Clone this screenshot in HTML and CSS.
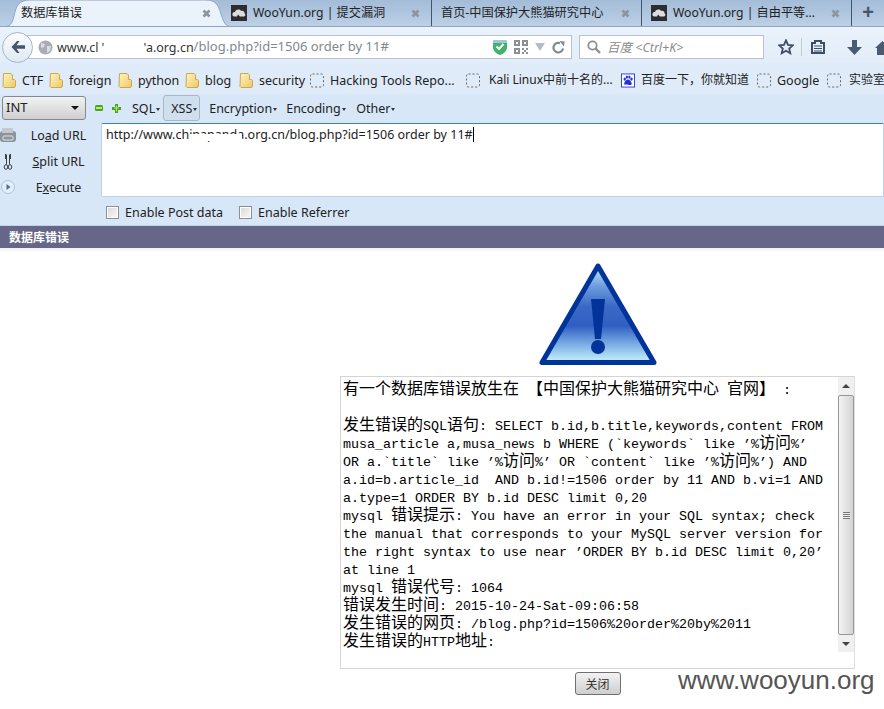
FILE: index.html
```html
<!DOCTYPE html>
<html lang="zh">
<head>
<meta charset="utf-8">
<title>数据库错误</title>
<link rel="stylesheet" href="styles.css">
</head>
<body>
<svg class="defs" width="0" height="0">
  <defs>
    <linearGradient id="fold" x1="0" y1="0" x2="1" y2="1"><stop offset="0" stop-color="#fdf3c0"/><stop offset="1" stop-color="#eec964"/></linearGradient>
    <linearGradient id="tri" x1="0" y1="0" x2="0" y2="1">
      <stop offset="0" stop-color="#c4ecfa"/><stop offset=".2" stop-color="#6f9fe0"/><stop offset=".42" stop-color="#3a68c6"/><stop offset=".62" stop-color="#2f5fc2"/><stop offset=".82" stop-color="#7fb0e6"/><stop offset="1" stop-color="#c8f4fd"/>
    </linearGradient>
    <symbol id="folder" viewBox="0 0 14 15"><path d="M1.500 .5h7.500l1.500 1.500v4.500h2l1 1v5.500l-1 1.500h-10.500l-1-1z" fill="url(#fold)" stroke="#c9a94f"/></symbol>
    <symbol id="blank" viewBox="0 0 14 14"><rect x=".5" y=".5" width="13" height="13" rx="2" fill="none" stroke="#666" stroke-dasharray="2 2"/></symbol>
    <symbol id="cloud" viewBox="0 0 16 16"><rect width="16" height="16" fill="#2d2d2f"/><path d="M2 11c-1.500-2 0-4 2-4 1-3 5-3 6-1 2-1 4 1 3.500 2.500 1.500 .5 1 3-1 3H9L7 9.500 6 11.500H3z" fill="#ddd"/></symbol>
    <symbol id="close" viewBox="0 0 9 9"><path d="M1.500 1.500l6 6M7.500 1.500l-6 6" stroke="#8c949e" stroke-width="2.600" fill="none"/></symbol>
  </defs>
</svg>

<header class="tabs">
  <div class="tab tab-active">
    <svg class="tab-shape" viewBox="0 0 230 27"><path d="M0 27c8 0 10-3 12-11C14 6 17 0 28 0h176c10 0 12 5 15 14 3 9 5 13 11 13z" fill="#eaf2fb" stroke="#8fa6bf"/></svg>
    <span class="tab-label">数据库错误</span>
    <svg class="tab-close"><use href="#close"/></svg>
  </div>
  <div class="tab">
    <svg class="favicon"><use href="#cloud"/></svg>
    <span class="tab-label">WooYun.org | 提交漏洞</span>
    <svg class="tab-close"><use href="#close"/></svg>
  </div>
  <div class="tab">
    <span class="tab-label">首页-中国保护大熊猫研究中心</span>
    <svg class="tab-close"><use href="#close"/></svg>
  </div>
  <div class="tab">
    <svg class="favicon"><use href="#cloud"/></svg>
    <span class="tab-label">WooYun.org | 自由平等...</span>
    <svg class="tab-close"><use href="#close"/></svg>
  </div>
  <div class="tab-new">+</div>
</header>

<nav class="nav">
  <button class="back" aria-label="back">
    <svg width="16" height="14" viewBox="0 0 16 14"><path d="M7 1L1.500 7 7 13h2.500L6.500 8.800H15V5.200H6.500L9.500 1z" fill="#47566a"/></svg>
  </button>
  <div class="urlbar">
    <svg class="globe" width="15" height="15" viewBox="0 0 15 15"><circle cx="7.500" cy="7.500" r="7" fill="#a9adb3"/><path d="M3 3l4 1-1 3-3 1zM9 6l4 0-1 5-3 2z" fill="#d9dce0"/></svg>
    <span class="url-host">www.cl</span><span class="url-redact"><span class="url-host">'</span></span><span class="url-host">'a.org.cn</span><span class="url-path">/blog.php?id=1506 order by 11#</span>
    <span class="spacer"></span>
    <svg class="url-ic" width="14" height="16" viewBox="0 0 14 16"><path d="M0 1h14v8c0 3-4 6-7 7-3-1-7-4-7-7z" fill="#3fb46a"/><path d="M0 1h14v3H0z" fill="#9dc9d8"/><path d="M3.500 7.500l2.500 2.500 4.500-5" stroke="#fff" stroke-width="2" fill="none"/></svg>
    <svg class="url-ic" width="14" height="14" viewBox="0 0 14 14"><path d="M0 0h6v6H0zM8 0h6v6H8zM0 8h6v6H0zM8 8h2v2H8zM12 8h2v2h-2zM8 12h2v2H8zM12 12h2v2h-2zM10 10h2v2h-2z" fill="#8d9196"/><path d="M2 2h2v2H2zM10 2h2v2h-2zM2 10h2v2H2z" fill="#fff"/></svg>
    <svg class="url-ic" width="10" height="8" viewBox="0 0 10 8"><path d="M0 0h10L5 8z" fill="#b4bcc6"/></svg>
    <svg class="url-ic" width="13" height="13" viewBox="0 0 13 13"><path d="M11 7.500A4.800 4.800 0 1 1 8 2.200" stroke="#7d8a99" stroke-width="2.200" fill="none"/><path d="M7.500 0L12.500 .5 12 5.500z" fill="#7d8a99"/></svg>
  </div>
  <div class="searchbar">
    <svg width="14" height="14" viewBox="0 0 14 14"><circle cx="5.500" cy="5.500" r="4.200" fill="none" stroke="#8a8f96" stroke-width="1.800"/><path d="M8.500 8.500l4.500 4.500" stroke="#8a8f96" stroke-width="2.400"/></svg>
    <span class="search-text">百度 &lt;Ctrl+K&gt;</span>
  </div>
  <div class="tools">
    <svg width="16" height="16" viewBox="0 0 16 16"><path d="M8 1.300l2 4.500 4.900.5-3.700 3.200 1.100 4.800L8 11.800l-4.300 2.500 1.100-4.800L1.100 6.300 6 5.800z" fill="none" stroke="#3e4f63" stroke-width="1.800"/></svg>
    <span class="tool-sep"></span>
    <svg class="tool-clip" width="14" height="14" viewBox="0 0 14 14"><path d="M1 3h3V1h6v2h3v10H1z" fill="none" stroke="#3e4f63" stroke-width="2"/><path d="M3 6h8M3 8.500h8M3 11h8" stroke="#3e4f63"/></svg>
    <svg class="tool-down" width="15" height="15" viewBox="0 0 15 15"><path d="M5 0h5v7h5l-7.500 8L0 7h5z" fill="#4a5b70"/></svg>
    <svg class="tool-home" width="15" height="15" viewBox="0 0 15 15"><path d="M7.500 1L15 8h-2v7H2V8H0z" fill="#4a5b70"/></svg>
  </div>
</nav>

<div class="bookmarks">
  <div class="bm bm-ctf"><svg class="bm-ic"><use href="#folder"/></svg><span>CTF</span></div>
  <div class="bm bm-foreign"><svg class="bm-ic"><use href="#folder"/></svg><span>foreign</span></div>
  <div class="bm bm-python"><svg class="bm-ic"><use href="#folder"/></svg><span>python</span></div>
  <div class="bm bm-blog"><svg class="bm-ic"><use href="#folder"/></svg><span>blog</span></div>
  <div class="bm bm-security"><svg class="bm-ic"><use href="#folder"/></svg><span>security</span></div>
  <div class="bm bm-hack"><svg class="bm-ic"><use href="#blank"/></svg><span>Hacking Tools Repo...</span></div>
  <div class="bm bm-kali"><svg class="bm-ic"><use href="#blank"/></svg><span>Kali Linux中前十名的...</span></div>
  <div class="bm bm-baidu"><svg class="bm-ic" viewBox="0 0 15 15"><rect x=".5" y=".5" width="14" height="14" fill="#fff" stroke="#2a3be0"/><g fill="#2430d8"><ellipse cx="4" cy="6" rx="1.300" ry="1.700"/><ellipse cx="6.300" cy="3.800" rx="1.200" ry="1.700"/><ellipse cx="9" cy="3.800" rx="1.200" ry="1.700"/><ellipse cx="11.200" cy="6" rx="1.300" ry="1.700"/><path d="M7.500 6.500c2 0 4 3 4 4.500s-2 1.700-4 1-4 1-4-1 2-4.500 4-4.500z"/></g></svg><span>百度一下，你就知道</span></div>
  <div class="bm bm-google"><svg class="bm-ic"><use href="#blank"/></svg><span>Google</span></div>
  <div class="bm bm-lab"><svg class="bm-ic"><use href="#blank"/></svg><span>实验室</span></div>
</div>

<section class="hackbar">
  <div class="hb-menu">
    <div class="hb-select"><span>INT</span><i class="hb-select-arrow"></i></div>
    <svg class="hb-minus" width="8" height="6" viewBox="0 0 8 6"><rect width="8" height="6" y="0" rx="1.500" fill="#46a518"/><rect x="1" y="2" width="6" height="2" fill="#b6e77c"/></svg>
    <svg class="hb-plus" width="9" height="9" viewBox="0 0 9 9"><path d="M3 0h3v3h3v3H6v3H3V6H0V3h3z" fill="#46a518"/><path d="M4 1.500h1v2h2v1H5v3H4v-3H2v-1h2z" fill="#b6e77c"/></svg>
    <span class="hb-item hb-sql">SQL<i class="caret"></i></span>
    <span class="hb-item hb-xss">XSS<i class="caret"></i></span>
    <span class="hb-item hb-enc">Encryption<i class="caret"></i></span>
    <span class="hb-item hb-encd">Encoding<i class="caret"></i></span>
    <span class="hb-item hb-oth">Other<i class="caret"></i></span>
  </div>
  <div class="hb-main">
    <div class="hb-actions">
      <div class="hb-act">
        <svg width="16" height="15" viewBox="0 0 16 15"><rect y="3" width="16" height="11" rx="3" fill="#8b949c"/><rect x="2" y="0" width="11" height="5" fill="#c3c9cf"/><rect x="3" y="8" width="10" height="4" rx="1" fill="none" stroke="#e4e7ea"/></svg>
        <span class="act-text">Lo<u>a</u>d URL</span>
      </div>
      <div class="hb-act">
        <svg width="10" height="17" viewBox="0 0 10 17"><g fill="none" stroke="#3a4048"><ellipse cx="3" cy="14" rx="1.800" ry="2.300"/><ellipse cx="7" cy="14" rx="1.800" ry="2.300"/><path d="M3.500 11.500V1.500M6.500 11.500V1.500M2.500 6V1M7.500 6V1" /></g></svg>
        <span class="act-text"><u>S</u>plit URL</span>
      </div>
      <div class="hb-act">
        <svg width="14" height="14" viewBox="0 0 14 14"><circle cx="7" cy="7" r="6.500" fill="#e3eef9" stroke="#a9c3df"/><path d="M5.500 4l4 3-4 3z" fill="#3d6fa8"/></svg>
        <span class="act-text">E<u>x</u>ecute</span>
      </div>
    </div>
    <div class="hb-input">
      <span class="hb-url">http://www.chinapanda.org.cn/blog.php?id=1506 order by 11#</span><i class="hb-cursor"></i>
      <i class="hb-redact"></i>
    </div>
  </div>
  <div class="hb-checks">
    <label class="hb-check"><i class="cb"></i>Enable Post data</label>
    <label class="hb-check"><i class="cb"></i>Enable Referrer</label>
  </div>
</section>

<div class="titlebar">数据库错误</div>
<div class="fade"></div>

<main class="page">
  <div class="col">
    <svg class="warn" width="118" height="103" viewBox="0 0 118 103">
      <path d="M59 3L3 99.500h112z" fill="url(#tri)" stroke="#023399" stroke-width="5" stroke-linejoin="round"/>
      <path d="M52 36h14l-4 40h-6z" fill="#023399"/>
      <circle cx="59" cy="84" r="7" fill="#023399"/>
    </svg>
    <div class="box">
      <div class="box-text">
        <div class="ln"><b>有一个数据库错误放生在</b> <b>【中国保护大熊猫研究中心</b> <b>官网】</b> :</div>
        <div class="ln">&nbsp;</div>
        <div class="ln"><b>发生错误的</b>SQL<b>语句</b>: SELECT b.id,b.title,keywords,content FROM</div>
        <div class="ln">musa_article a,musa_news b WHERE (`keywords` like ’%<b>访问</b>%’</div>
        <div class="ln">OR a.`title` like ’%<b>访问</b>%’ OR `content` like ’%<b>访问</b>%’) AND</div>
        <div class="ln">a.id=b.article_id  AND b.id!=1506 order by 11 AND b.vi=1 AND</div>
        <div class="ln">a.type=1 ORDER BY b.id DESC limit 0,20</div>
        <div class="ln">mysql <b>错误提示</b>: You have an error in your SQL syntax; check</div>
        <div class="ln">the manual that corresponds to your MySQL server version for</div>
        <div class="ln">the right syntax to use near ’ORDER BY b.id DESC limit 0,20’</div>
        <div class="ln">at line 1</div>
        <div class="ln">mysql <b>错误代号</b>: 1064</div>
        <div class="ln"><b>错误发生时间</b>: 2015-10-24-Sat-09:06:58</div>
        <div class="ln"><b>发生错误的网页</b>: /blog.php?id=1506%20order%20by%2011</div>
        <div class="ln"><b>发生错误的</b>HTTP<b>地址</b>:</div>
      </div>
      <div class="scroll">
        <div class="sb-btn sb-btn-top"><i class="sb-up"></i></div>
        <div class="sb-thumb"><i class="sb-grip"></i></div>
        <div class="sb-btn"><i class="sb-down"></i></div>
        <div class="sb-corner"></div>
      </div>
    </div>
    <button class="closebtn">关闭</button>
  </div>
</main>
<div class="watermark">www.wooyun.org</div>
</body>
</html>
```
FILE: styles.css
```css
* { box-sizing: border-box; }
html, body { margin: 0; padding: 0; }
body {
  width: 884px;
  height: 709px;
  overflow: hidden;
  position: relative;
  background: #fff;
  color: #222;
  font: 12.5px/1.2 "Noto Sans", "Noto Sans CJK SC", sans-serif;
}
.defs { position: absolute; }

/* tabs */
.tabs {
  height: 27px;
  display: flex;
  padding-left: 8px;
  background: linear-gradient(#a4bcd8, #bcd0e6);
  border-bottom: 1px solid #8fa6bf;
  overflow: hidden;
}
.tab {
  position: relative;
  width: 210px;
  height: 26px;
  display: flex;
  align-items: center;
  padding: 0 11px 0 9px;
  border-right: 1px solid #3f5670;
  font-size: 12.2px;
  color: #222;
}
.tab-active { width: 214px; padding-left: 13px; border-right: 0; }
.tab-shape { position: absolute; left: -6px; top: 0; width: 230px; height: 27px; }
.tab-label { position: relative; flex: 1; white-space: nowrap; }
.tab-close { position: relative; width: 9px; height: 9px; }
.favicon { width: 16px; height: 16px; margin-right: 6px; flex: none; }
.tab-new { width: 32px; text-align: center; font: 700 20px/25px "Liberation Sans", sans-serif; color: #46566a; }

/* nav */
.nav {
  height: 36px;
  display: flex;
  align-items: center;
  padding: 4px 0 0 2px;
  background: linear-gradient(#eaf2fb, #e2edf9);
}
.nav > * { flex: none; }
.back {
  position: relative;
  z-index: 1;
  width: 31px;
  height: 31px;
  margin-right: -10px;
  padding: 0;
  border: 1px solid #a5b6c9;
  border-radius: 50%;
  background: linear-gradient(#fbfdff, #dfe8f2);
  display: flex;
  align-items: center;
  justify-content: center;
}
.urlbar {
  width: 549px;
  height: 24px;
  display: flex;
  align-items: center;
  padding: 0 6px 0 15px;
  background: #fff;
  border: 1px solid #b4c4d6;
  border-left: 0;
  font-size: 12.5px;
  white-space: nowrap;
}
.globe { margin-right: 4px; }
.url-host { color: #333; }
.url-path { color: #808890; font-size: 13px; }
.url-redact { width: 45px; display: inline-block; padding-left: 3px; }
.spacer { flex: 1; }
.url-ic { margin-left: 7px; }
.searchbar {
  width: 185px;
  height: 24px;
  margin-left: 7px;
  display: flex;
  align-items: center;
  gap: 6px;
  padding-left: 7px;
  background: #fff;
  border: 1px solid #b4c4d6;
}
.search-text { font-style: italic; font-size: 12.5px; color: #8c8c8c; }
.tools { display: flex; align-items: center; margin-left: 14px; }
.tool-sep { width: 1px; height: 18px; background: #c0cddb; margin: 0 9px 0 7px; }
.tool-clip { margin-right: 22px; }
.tool-home { margin-left: 13px; }

/* bookmarks */
.bookmarks {
  height: 31px;
  display: flex;
  align-items: center;
  padding: 4px 0 0 2px;
  white-space: nowrap;
  overflow: hidden;
  background: #dfebf8;
  font-size: 12.5px;
  color: #222;
}
.bm { display: flex; align-items: center; flex: none; }
.bm-ic { width: 14px; height: 15px; margin-right: 6px; flex: none; }
.bm-ctf { width: 47px; }
.bm-foreign { width: 69px; }
.bm-python { width: 67px; }
.bm-blog { width: 54px; }
.bm-security { width: 71px; }
.bm-hack { width: 156px; }
.bm-kali { width: 155px; font-size: 12px; }
.bm-kali .bm-ic { margin-right: 9px; }
.bm-baidu { width: 136px; font-size: 12px; }
.bm-google { width: 70px; }
.bm-lab { font-size: 12px; }
.bm-lab .bm-ic { margin-right: 8px; }

/* hackbar */
.hackbar {
  height: 132px;
  background: #d8e7f7;
  border-bottom: 1px solid #c2d3e6;
}
.hb-menu {
  height: 28px;
  display: flex;
  align-items: center;
  padding-left: 2px;
  font-size: 12.5px;
}
.hb-select {
  width: 84px;
  height: 24px;
  display: flex;
  align-items: center;
  justify-content: space-between;
  padding: 0 6px 0 3px;
  border: 1px solid #7f8a96;
  border-radius: 3px;
  background: linear-gradient(#f2f2f2, #cfcfcf);
  font-size: 13px;
}
.hb-select-arrow { width: 0; height: 0; border: 4px solid transparent; border-top: 4px solid #111; border-bottom: 0; }
.hb-minus { margin-left: 9px; }
.hb-plus { margin-left: 9px; }
.hb-item { display: flex; align-items: center; white-space: nowrap; flex: none; }
.caret { width: 0; height: 0; border: 2px solid transparent; border-top: 3px solid #333; border-bottom: 0; margin-left: 1px; margin-top: 2px; }
.hb-sql { margin-left: 11px; }
.hb-xss {
  height: 26px;
  width: 37px;
  margin-left: 3px;
  padding-left: 7px;
  border: 1px solid #aab8c8;
  border-radius: 3px;
  background: #d0dfee;
}
.hb-enc { margin-left: 9px; width: 77px; }
.hb-encd { width: 70px; }
.hb-main { display: flex; height: 79px; }
.hb-actions { width: 101px; display: flex; flex-direction: column; }
.hb-act {
  flex: none;
  height: 26px;
  display: grid;
  grid-template-columns: 16px 1fr;
  align-items: center;
  justify-items: center;
}
.act-text { font-size: 12.5px; }
.hb-input {
  position: relative;
  flex: 1;
  height: 74px;
  margin-top: 1px;
  padding: 3px 4px;
  background: #fff;
  border: 1px solid #bfd2e6;
  border-top: 1px solid #3f7fc0;
  border-radius: 2px 0 0 2px;
  font-size: 12.5px;
  color: #222;
  white-space: nowrap;
}
.hb-cursor { display: inline-block; width: 1px; height: 15px; background: #000; vertical-align: -3px; }
.hb-redact { position: absolute; left: 88px; top: 10px; width: 52px; height: 7px; background: #fff; }
.hb-checks {
  height: 22px;
  display: flex;
  align-items: center;
  padding-left: 106px;
  gap: 16px;
  font-size: 12.5px;
}
.hb-check { display: flex; align-items: center; gap: 6px; }
.cb { width: 13px; height: 13px; border: 1px solid #8a8f96; background: linear-gradient(135deg, #d8d8d8, #fafafa); box-shadow: inset 0 0 0 1px #fff; }

.titlebar {
  height: 22px;
  padding-left: 9px;
  background: #666688;
  color: #fff;
  font: 700 12px/22px "Noto Sans CJK SC", sans-serif;
}
.fade { height: 4px; background: linear-gradient(#f0f0f0, #fff); }

/* page */
.page { padding-left: 340px; }
.col { width: 515px; display: flex; flex-direction: column; align-items: center; }
.warn { margin-top: 11px; margin-bottom: 10px; }
.box {
  width: 515px;
  height: 293px;
  display: flex;
  border: 1px solid #d4d4d4;
  border-right-color: #e0e0e0;
}
.box-text {
  flex: 1;
  padding: 5px 0 0 2px;
  font: 13.33px/18px "Liberation Mono", monospace;
  color: #000;
  overflow: hidden;
}
.ln { height: 18px; white-space: pre; }
.ln b { font: 400 16px/0 "Noto Sans CJK SC", "Liberation Mono", sans-serif; }
.scroll { width: 16px; display: flex; flex-direction: column; background: #f0f0f0; }
.sb-btn { height: 17px; display: flex; align-items: center; justify-content: center; }
.sb-btn-top { height: 18px; }
.sb-up { width: 0; height: 0; border: 4px solid transparent; border-bottom: 4px solid #444; border-top: 0; }
.sb-down { width: 0; height: 0; border: 4px solid transparent; border-top: 4px solid #444; border-bottom: 0; }
.sb-thumb {
  height: 240px;
  display: flex;
  align-items: center;
  justify-content: center;
  border: 1px solid #979797;
  border-radius: 2px;
  background: linear-gradient(90deg, #f4f4f4, #d4d4d4);
}
.sb-grip { width: 7px; height: 7px; background: repeating-linear-gradient(#777 0 1px, #eee 1px 2px); }
.sb-corner { flex: 1; background: #fff; }
.closebtn {
  width: 46px;
  height: 23px;
  margin-top: 3px;
  padding: 0;
  border: 1px solid #707070;
  border-radius: 3px;
  background: linear-gradient(#f2f2f2, #cfcfcf);
  font: 12px/1 "Noto Sans CJK SC", sans-serif;
  color: #333;
}
.watermark {
  position: absolute;
  left: 678px;
  top: 665px;
  font: 26px/30px "Liberation Sans", sans-serif;
  color: #555;
}
```
